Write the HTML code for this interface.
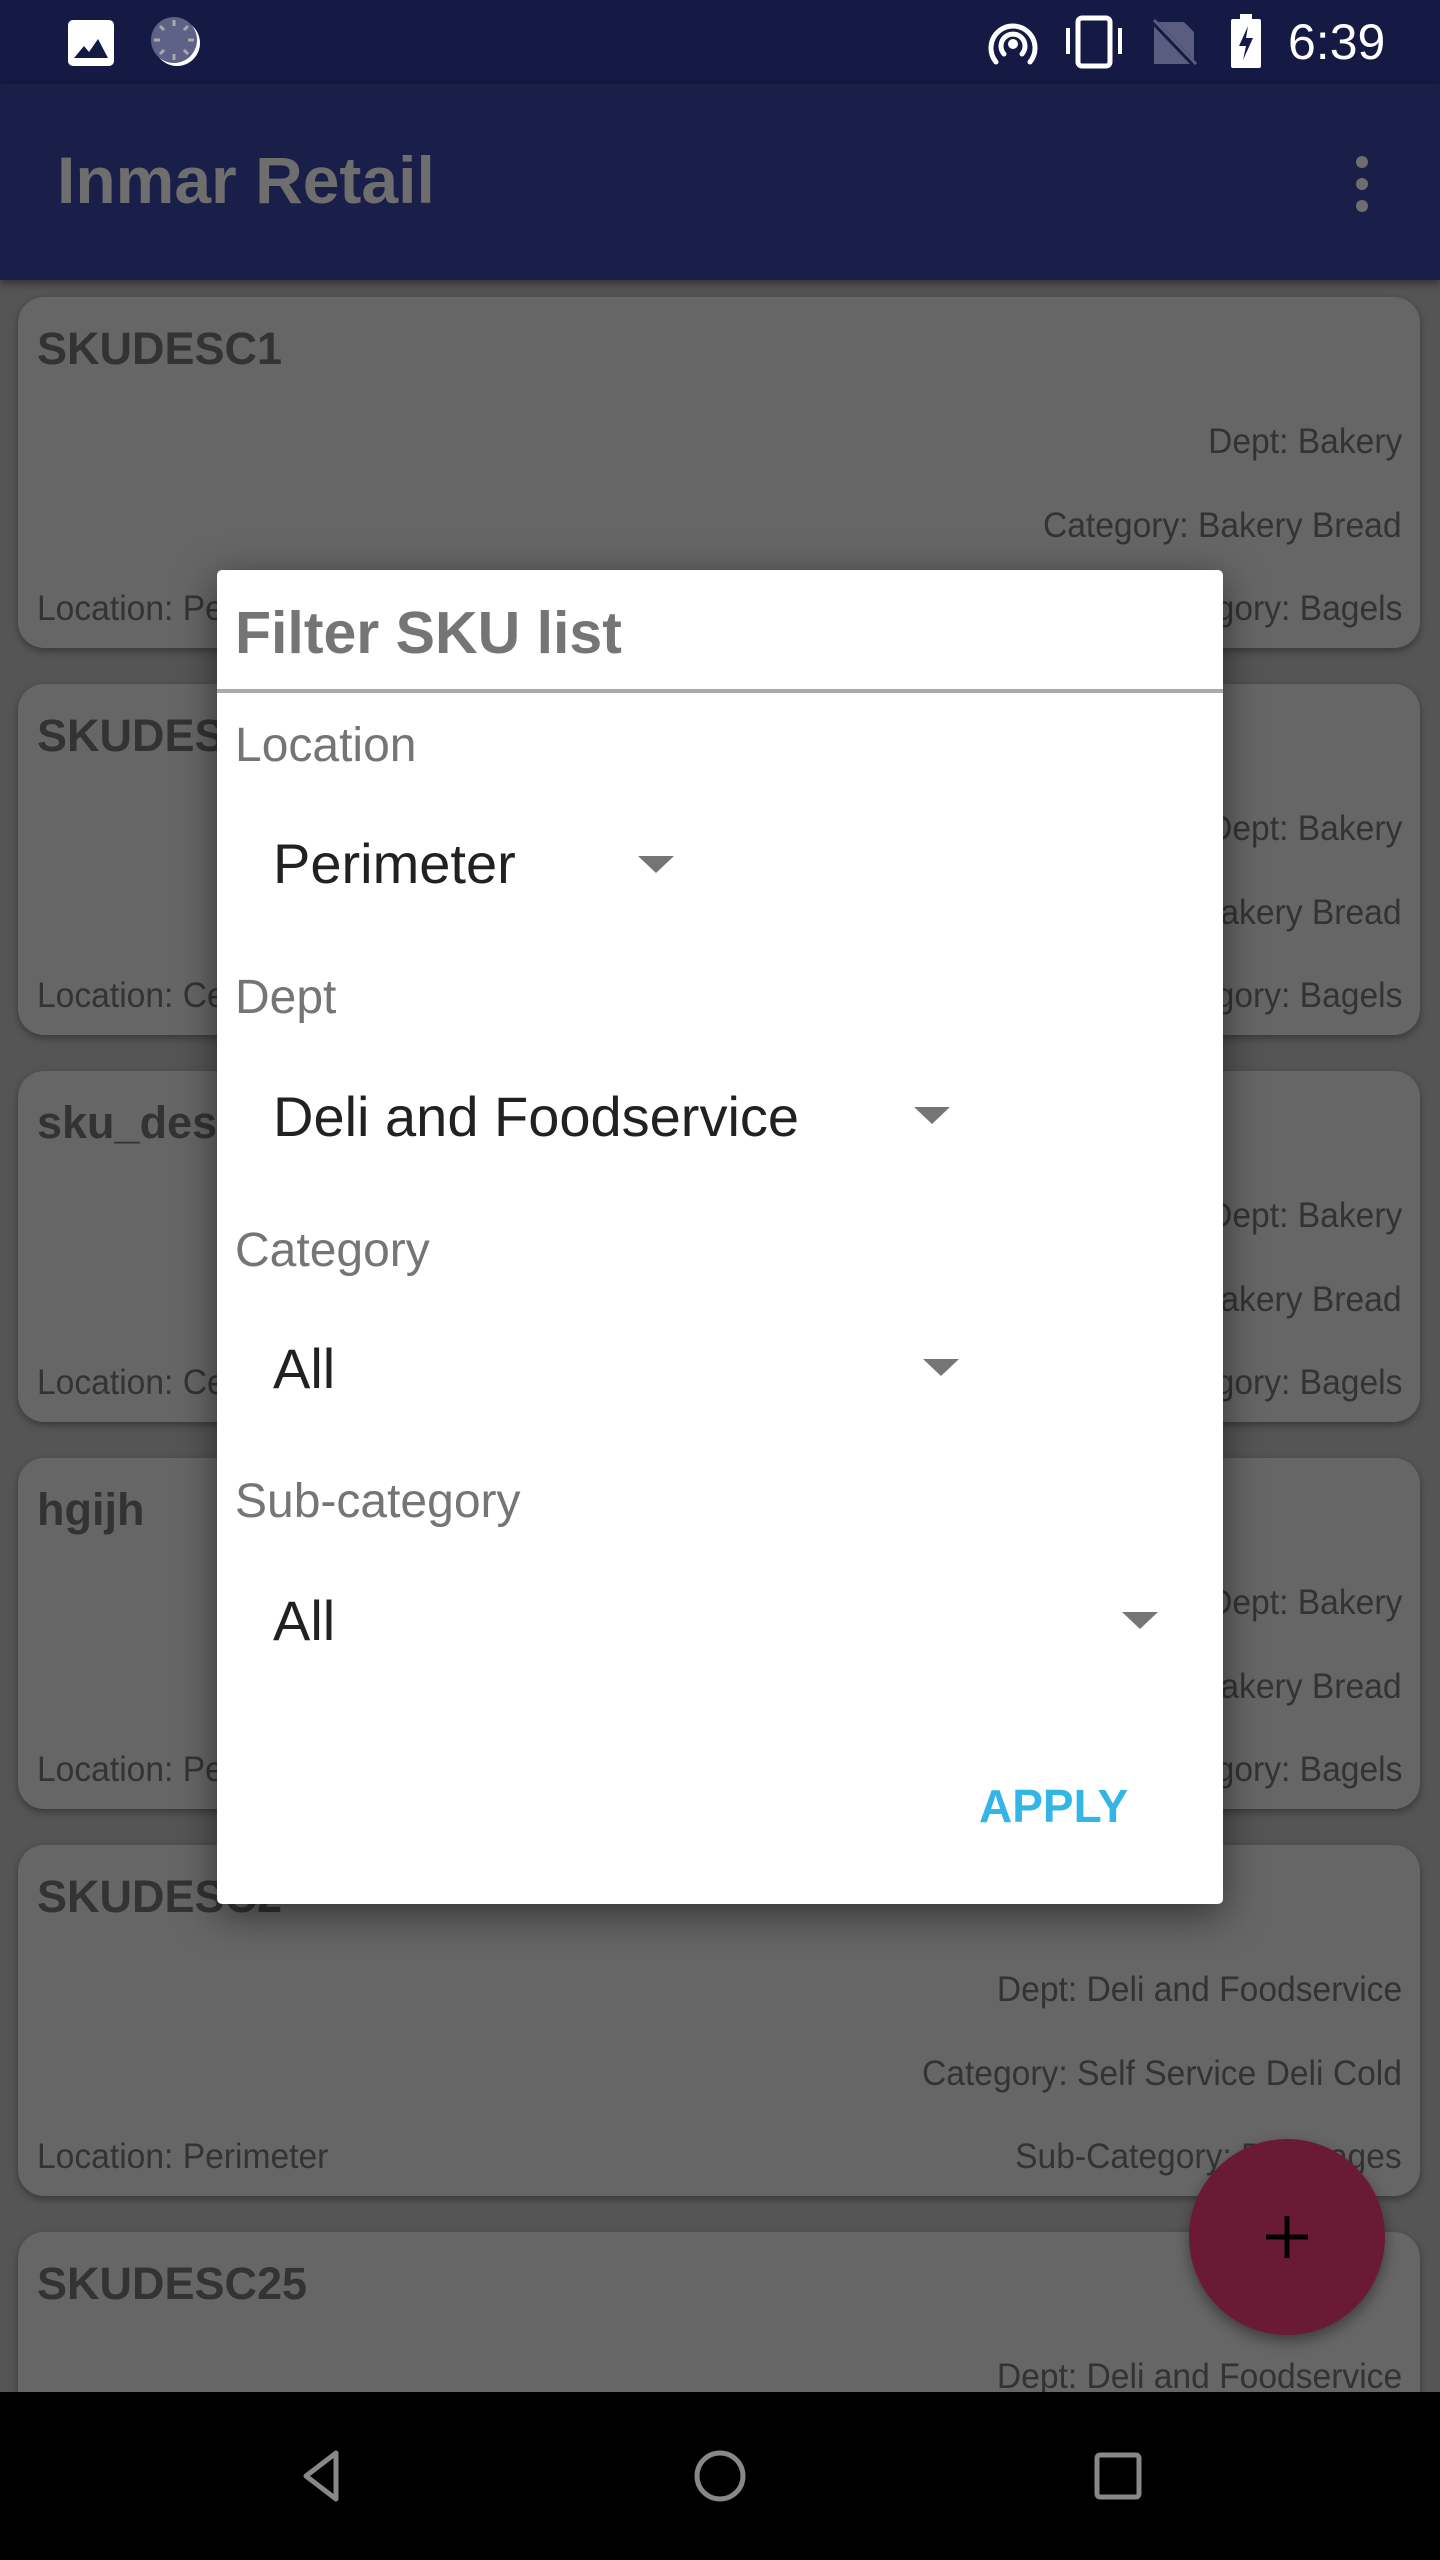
<!DOCTYPE html>
<html style="width:1440px;height:2560px;overflow:hidden"><head><meta charset="utf-8"><style>
*{margin:0;padding:0;box-sizing:border-box}
body{width:1440px;height:2560px;overflow:hidden;background:#555;font-family:"Liberation Sans",sans-serif;position:relative}
.a{position:absolute;white-space:nowrap}
.sb{position:absolute;left:0;top:0;width:1440px;height:84px;background:#141a44}
.ab{position:absolute;left:0;top:84px;width:1440px;height:196px;background:#1a1f4a;box-shadow:0 4px 8px rgba(0,0,0,.4)}
.card{position:absolute;left:18px;width:1402px;height:351px;background:#666;border-radius:26px;box-shadow:0 3px 8px rgba(0,0,0,.35)}
.t{position:absolute;left:19px;top:26px;font-size:45px;font-weight:bold;color:#333}
.r{position:absolute;right:18px;font-size:35px;color:#333;transform:scaleX(.96);transform-origin:right;white-space:nowrap;line-height:40px}
.l{position:absolute;left:19px;font-size:35px;color:#333;transform:scaleX(.96);transform-origin:left;white-space:nowrap;line-height:40px}
.dlg{position:absolute;left:217px;top:570px;width:1006px;height:1334px;background:#fff;border-radius:5px;box-shadow:0 10px 40px rgba(0,0,0,.5)}
.lab{position:absolute;left:18px;font-size:48px;color:#757575;line-height:56px}
.val{position:absolute;left:56px;font-size:56px;color:#212121;line-height:64px;white-space:nowrap}
.arr{position:absolute;width:0;height:0;border-left:18px solid transparent;border-right:18px solid transparent;border-top:17px solid #757575}
</style></head><body>
<div class="sb">
<svg class="a" style="left:68px;top:20px" width="46" height="46" viewBox="0 0 46 46"><rect x="0" y="0" width="46" height="46" rx="5" fill="#fff"/><path d="M6 38 L16 26 L21 32 L30 19 L40 38Z" fill="#141a44"/></svg>
<svg class="a" style="left:150px;top:16px" width="52" height="52" viewBox="0 0 52 52"><circle cx="27" cy="27" r="23" fill="#fff"/><circle cx="24" cy="24" r="23" fill="#5f6287"/><g stroke="#aaa" stroke-width="3"><path d="M24 4v6M24 38v6M4 24h6M38 24h6M10 10l4 4M34 34l4 4M38 10l-4 4M10 38l4-4"/></g></svg>
<svg class="a" style="left:986px;top:18px" width="54" height="50" viewBox="0 0 54 50"><g fill="none" stroke="#fff" stroke-width="5" stroke-linecap="round"><path d="M10 44 A22 22 0 1 1 44 44"/><path d="M18 36 A12 12 0 1 1 36 36"/></g><circle cx="27" cy="26" r="5" fill="#fff"/></svg>
<svg class="a" style="left:1062px;top:14px" width="64" height="56" viewBox="0 0 64 56"><rect x="16" y="4" width="32" height="48" rx="4" fill="none" stroke="#fff" stroke-width="5"/><path d="M6 14v26M58 14v26" stroke="#fff" stroke-width="4"/></svg>
<svg class="a" style="left:1150px;top:18px" width="48" height="50" viewBox="0 0 48 50"><path d="M4 4h30l10 10v32H4z" fill="#5a5d80"/><path d="M2 2L46 48" stroke="#141a44" stroke-width="6"/><path d="M4 2L46 46" stroke="#5a5d80" stroke-width="3"/></svg>
<svg class="a" style="left:1230px;top:14px" width="32" height="54" viewBox="0 0 32 54"><rect x="10" y="0" width="12" height="6" fill="#fff"/><rect x="1" y="5" width="30" height="49" rx="2" fill="#fff"/><path d="M18 12L9 32h7l-3 14 10-22h-7z" fill="#141a44"/></svg>
<div class="a" style="left:1288px;top:14px;font-size:50px;color:#fff;line-height:56px">6:39</div>
</div>
<div class="ab">
<div class="a" style="left:57px;top:58px;font-size:66px;font-weight:bold;color:#6e6e6e;line-height:76px">Inmar Retail</div>
<svg class="a" style="left:1352px;top:70px" width="20" height="60"><circle cx="10" cy="8" r="6" fill="#6e6e6e"/><circle cx="10" cy="30" r="6" fill="#6e6e6e"/><circle cx="10" cy="52" r="6" fill="#6e6e6e"/></svg>
</div>

<div class="card" style="top:297px"><div class="t">SKUDESC1</div><div class="r" style="top:125px">Dept: Bakery</div><div class="r" style="top:209px">Category: Bakery Bread</div><div class="r" style="top:292px">Sub-Category: Bagels</div><div class="l" style="top:292px">Location: Perimeter</div></div>
<div class="card" style="top:684px"><div class="t">SKUDESC3</div><div class="r" style="top:125px">Dept: Bakery</div><div class="r" style="top:209px">Category: Bakery Bread</div><div class="r" style="top:292px">Sub-Category: Bagels</div><div class="l" style="top:292px">Location: Center</div></div>
<div class="card" style="top:1071px"><div class="t">sku_desc</div><div class="r" style="top:125px">Dept: Bakery</div><div class="r" style="top:209px">Category: Bakery Bread</div><div class="r" style="top:292px">Sub-Category: Bagels</div><div class="l" style="top:292px">Location: Center</div></div>
<div class="card" style="top:1458px"><div class="t">hgijh</div><div class="r" style="top:125px">Dept: Bakery</div><div class="r" style="top:209px">Category: Bakery Bread</div><div class="r" style="top:292px">Sub-Category: Bagels</div><div class="l" style="top:292px">Location: Perimeter</div></div>
<div class="card" style="top:1845px"><div class="t">SKUDESC2</div><div class="r" style="top:125px">Dept: Deli and Foodservice</div><div class="r" style="top:209px">Category: Self Service Deli Cold</div><div class="r" style="top:292px">Sub-Category: Beverages</div><div class="l" style="top:292px">Location: Perimeter</div></div>
<div class="card" style="top:2232px"><div class="t">SKUDESC25</div><div class="r" style="top:125px">Dept: Deli and Foodservice</div></div>

<div class="a" style="left:1189px;top:2139px;width:196px;height:196px;border-radius:50%;background:#6b1a35;box-shadow:0 6px 14px rgba(0,0,0,.4)"></div>
<svg class="a" style="left:1262px;top:2212px" width="50" height="50"><path d="M25 4v42M4 25h42" stroke="#000" stroke-width="5"/></svg>

<div class="dlg">
<div class="a" style="left:18px;top:28px;font-size:59px;font-weight:bold;color:#757575;line-height:70px">Filter SKU list</div>
<div class="a" style="left:0;top:119px;width:1006px;height:4px;background:#aaa"></div>
<div class="lab" style="top:148px">Location</div>
<div class="val" style="top:262px">Perimeter</div>
<div class="arr" style="left:421px;top:286px"></div>
<div class="lab" style="top:400px">Dept</div>
<div class="val" style="top:515px">Deli and Foodservice</div>
<div class="arr" style="left:697px;top:537px"></div>
<div class="lab" style="top:653px">Category</div>
<div class="val" style="top:767px">All</div>
<div class="arr" style="left:706px;top:789px"></div>
<div class="lab" style="top:904px">Sub-category</div>
<div class="val" style="top:1019px">All</div>
<div class="arr" style="left:905px;top:1042px"></div>
<div class="a" style="left:762px;top:1210px;font-size:46px;font-weight:bold;color:#33b5e5;line-height:52px">APPLY</div>
</div>

<div class="a" style="left:0;top:2392px;width:1440px;height:220px;background:#000"></div>
<svg class="a" style="left:296px;top:2448px" width="50" height="56"><path d="M40 5 L10 28 L40 51Z" fill="none" stroke="#888" stroke-width="5" stroke-linejoin="round"/></svg>
<svg class="a" style="left:692px;top:2448px" width="56" height="56"><circle cx="28" cy="28" r="23" fill="none" stroke="#888" stroke-width="5"/></svg>
<svg class="a" style="left:1094px;top:2452px" width="48" height="48"><rect x="3" y="3" width="42" height="42" rx="3" fill="none" stroke="#888" stroke-width="5"/></svg>
</body></html>
